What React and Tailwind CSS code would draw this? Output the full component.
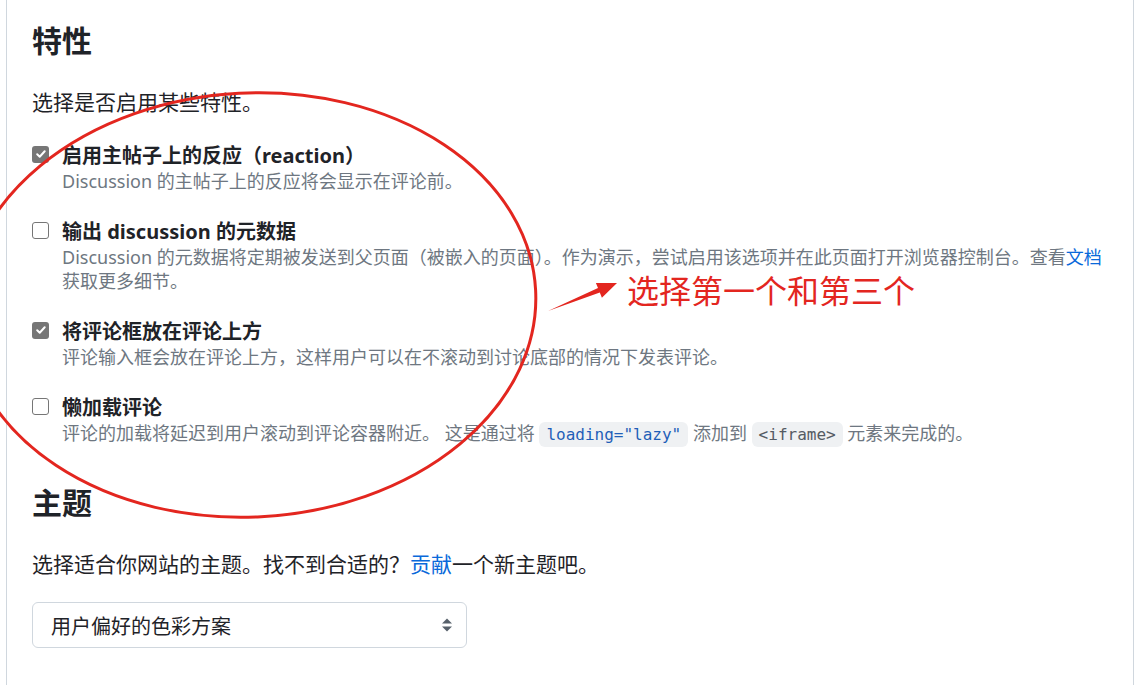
import React from "react";

const font = { fontFamily: '"Noto Sans", "Noto Sans CJK SC", sans-serif' };
const mono = { fontFamily: '"DejaVu Sans Mono", monospace' };

function Checkbox({ checked }) {
  if (checked) {
    return (
      <span className="mt-[3px] flex h-[17px] w-[17px] shrink-0 items-center justify-center rounded-[3px] bg-[#767676]">
        <svg width="12" height="12" viewBox="0 0 12 12" fill="none">
          <path d="M2.2 6.3l2.5 2.4 5-5.4" stroke="#fff" strokeWidth="2" strokeLinecap="round" strokeLinejoin="round" />
        </svg>
      </span>
    );
  }
  return (
    <span className="mt-[3px] block h-[17px] w-[17px] shrink-0 rounded-[3px] border-[1.5px] border-[#767676] bg-white" />
  );
}

function Option({ checked, label, children }) {
  return (
    <div className="flex items-start gap-[13px]">
      <Checkbox checked={checked} />
      <div>
        <div className="text-[20px] font-bold leading-[26px] text-[#1f2328]">{label}</div>
        <div className="text-[18px] leading-[24px] text-[#6e7781]">{children}</div>
      </div>
    </div>
  );
}

export default function App() {
  return (
    <div className="relative h-[685px] w-[1137px] overflow-hidden bg-white pl-[6px]" style={font}>
      <div className="h-full w-[1128px] border-x border-[#d0d7de] pl-[25px] pt-[22px]">
        {/* Features */}
        <h2 className="text-[30px] font-bold leading-[37.5px] text-[#1f2328]">特性</h2>
        <p className="mt-[27px] text-[21px] leading-[30px] text-[#1f2328]">选择是否启用某些特性。</p>

        <div className="mt-[26px] flex flex-col gap-[26px]">
          <Option checked label="启用主帖子上的反应（reaction）">
            Discussion 的主帖子上的反应将会显示在评论前。
          </Option>
          <Option label="输出 discussion 的元数据">
            <span className="whitespace-nowrap">
              Discussion 的元数据将定期被发送到父页面（被嵌入的页面）。作为演示，尝试启用该选项并在此页面打开浏览器控制台。查看
              <span className="text-[#0969da]">文档</span>
            </span>
            <br />
            获取更多细节。
          </Option>
          <Option checked label="将评论框放在评论上方">
            评论输入框会放在评论上方，这样用户可以在不滚动到讨论底部的情况下发表评论。
          </Option>
          <Option label="懒加载评论">
            评论的加载将延迟到用户滚动到评论容器附近。 这是通过将{" "}
            <code className="rounded-[6px] bg-[#eff1f3] px-[7px] py-[3px] text-[16px] text-[#1f5fb8]" style={mono}>
              loading="lazy"
            </code>{" "}
            添加到{" "}
            <code className="rounded-[6px] bg-[#eff1f3] px-[7px] py-[3px] text-[16px] text-[#555b63]" style={mono}>
              &lt;iframe&gt;
            </code>{" "}
            元素来完成的。
          </Option>
        </div>

        {/* Theme */}
        <h2 className="mt-[37px] text-[30px] font-bold leading-[37.5px] text-[#1f2328]">主题</h2>
        <p className="mt-[28px] text-[21px] leading-[30px] text-[#1f2328]">
          选择适合你网站的主题。找不到合适的？<span className="text-[#0969da]">贡献</span>一个新主题吧。
        </p>
        <div className="mt-[23px] flex h-[46px] w-[435px] items-center justify-between rounded-[6px] border border-[#d0d7de] pl-[18px] pr-[13px] pt-[3px] text-[20px] text-[#1f2328]">
          <span>用户偏好的色彩方案</span>
          <svg width="12" height="16" viewBox="0 0 12 16" className="-mt-[3px]">
            <path d="M6 1.5L11 6.5H1z" fill="#57606a" />
            <path d="M6 14.5L11 9.5H1z" fill="#57606a" />
          </svg>
        </div>
      </div>

      {/* Annotation overlay */}
      <svg className="pointer-events-none absolute left-0 top-0" width="1137" height="685">
        <ellipse cx="250" cy="305" rx="286" ry="212" fill="none" stroke="#e3261f" strokeWidth="3" transform="rotate(-3 250 305)" />
        <path d="M548 311 L599.8 292.6 L601.9 297.7 L617 283 L595.9 282.9 L598 288 Z" fill="#e3261f" />
      </svg>
      <div className="absolute left-[627px] top-[269px] text-[32px] leading-[44px] text-[#e3261f]">选择第一个和第三个</div>
    </div>
  );
}
